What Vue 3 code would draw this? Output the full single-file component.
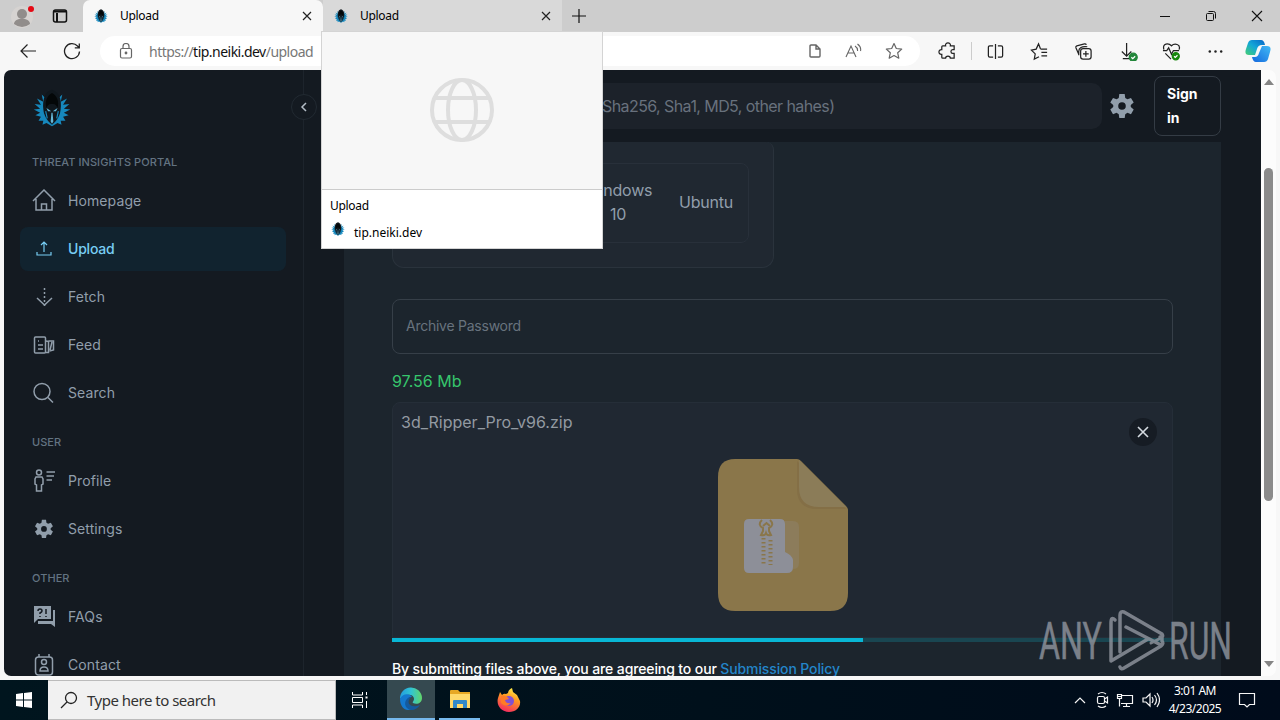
<template>
  <div class="desktop">
    <div class="titlebar">
      <div class="tab-tools">
        <svg class="avatar" width="28" height="30" viewBox="0 0 28 30">
          <circle cx="13" cy="16" r="11" fill="#d6d3d1" />
          <circle cx="13" cy="13" r="5" fill="#918d8b" />
          <path d="M5 23c0-7 16-7 16 0q-8 6-16 0z" fill="#918d8b" />
          <circle cx="22" cy="8" r="3" fill="#e50914" />
        </svg>
        <svg width="16" height="16" viewBox="0 0 16 16" fill="none" stroke="#111" stroke-width="1.5">
          <rect x="1.5" y="2" width="13" height="12" rx="2" />
          <path d="M2 3.5h12M5 5v9" stroke-width="2" />
        </svg>
      </div>
      <div v-for="n in 2" :key="n" :class="['browser-tab', { active: n === 1 }]">
        <svg class="favicon" viewBox="0 0 48 48"><use href="#mask" /></svg>
        <span class="tab-title">Upload</span>
        <svg class="tab-close" width="10" height="10" viewBox="0 0 10 10"><path d="M1 1l8 8M9 1L1 9" stroke="#222" stroke-width="1.2" /></svg>
      </div>
      <svg class="new-tab" width="14" height="14" viewBox="0 0 14 14"><path d="M7 0v14M0 7h14" stroke="#111" stroke-width="1.2" /></svg>
      <div class="window-controls">
        <svg width="12" height="12" viewBox="0 0 12 12"><path d="M1 6.5h10" stroke="#111" /></svg>
        <svg width="12" height="12" viewBox="0 0 12 12" fill="none" stroke="#111"><rect x="1.5" y="3.5" width="7" height="7" rx="1" /><path d="M3.5 1.5h5q2 0 2 2v5" /></svg>
        <svg width="12" height="12" viewBox="0 0 12 12"><path d="M1 1l10 10M11 1L1 11" stroke="#111" stroke-width="1.1" /></svg>
      </div>
    </div>

    <div class="toolbar">
      <svg class="nav-btn" width="18" height="16" viewBox="0 0 18 16" fill="none" stroke="#222" stroke-width="1.2"><path d="M17 8H2M8.500 1.500L2 8l6.500 6.500" /></svg>
      <svg class="nav-btn reload" width="18" height="18" viewBox="0 0 18 18" fill="none" stroke="#222" stroke-width="1.3"><path d="M16.500 9.500A7.500 7.500 0 1 1 14.500 4L16 5.500M16.300 1.500v4.300h-4.500" /></svg>
      <div class="address">
        <svg width="14" height="16" viewBox="0 0 14 16" fill="none" stroke="#666" stroke-width="1.2"><rect x="1.500" y="5.500" width="11" height="9.500" rx="1.500" /><path d="M4 5V3.500a3 3 0 0 1 6 0V5" /><circle cx="7" cy="10" r=".8" fill="#666" /></svg>
        <span class="url">https://<b>tip.neiki.dev</b>/upload</span>
        <div class="address-icons">
          <svg width="12" height="14" viewBox="0 0 12 14" fill="none" stroke="#666" stroke-width="1.400"><path d="M1 2q0-1 1-1h5l4 4v7q0 1-1 1H2q-1 0-1-1zM7 1v4h4" /></svg>
          <svg width="18" height="16" viewBox="0 0 18 16" fill="none" stroke="#666" stroke-width="1.100"><path d="M2 14L7 3l5 11M4 10h6M11 3q3 2 2.500 5M13.500 1q4 3 3 7" /></svg>
          <svg width="18" height="18" viewBox="0 0 18 18" fill="none" stroke="#666" stroke-width="1.200"><path d="M9 1.500l2.300 5 5.400.6-4 3.700 1.100 5.400L9 13.500l-4.800 2.700 1.100-5.400-4-3.700 5.400-.6z" stroke-linejoin="round" /></svg>
        </div>
      </div>
      <div class="tool-icons">
        <svg viewBox="0 0 20 20"><path d="M5 4h3c-1-4 6-4 5 0h4v4h-1.500c-2.500 0-2.500 4 0 4H17v5h-4c0-3-5-3-5 0H5q-1 0-1-1v-3c-4 .5-4-5.500 0-5V5q0-1 1-1z" /></svg>
        <i class="divider"></i>
        <svg viewBox="0 0 20 20"><path d="M10 2v16M7.500 4H4Q2.500 4 2.500 5.500v9Q2.500 16 4 16h3.500M12.500 4H16q1.500 0 1.500 1.500v9q0 1.500-1.500 1.500h-3.500" /></svg>
        <svg viewBox="0 0 20 20"><path d="M11 7L9 2 6.500 7.500 1.500 8.500l4 4-1 5.500 5-2.500M11 7.500h7M12 11h6M12 14.500h6" /></svg>
        <svg viewBox="0 0 20 20"><rect x="7" y="7" width="11" height="11" rx="2.500" /><path d="M12.500 9.500v6M9.500 12.500h6M5 13L2 6Q1.500 4.500 3 4l8-2q1.500-.3 2 1M14 5q-9-1-9 5v4" /></svg>
        <svg class="downloads" viewBox="0 0 20 20"><path d="M8 1v14M3 10l5 5 5-5M4 17.500h7" /><circle cx="15" cy="16" r="4.200" fill="#22863a" stroke="#22863a" /><path d="M13 16l1.500 1.500L17 15" stroke="#fff" /></svg>
        <svg viewBox="0 0 20 20"><path d="M2 8C0 1 7 1 10 4c3-3 10-2 8 4M1 9h4l2-3 3 7 2-4h6M3.500 12l6 6" /><circle cx="14.500" cy="15" r="3.700" fill="#16870b" stroke="#16870b" /><path d="M12.700 15l1.300 1.300 2.300-2.300" stroke="#fff" /></svg>
        <svg viewBox="0 0 20 20"><g fill="#222" stroke="none"><circle cx="4" cy="10" r="1.300" /><circle cx="10" cy="10" r="1.300" /><circle cx="16" cy="10" r="1.300" /></g></svg>
        <svg class="copilot" viewBox="0 0 26 24">
          <defs>
            <linearGradient id="cpA" x1="1" y1="0" x2="0" y2="1"><stop offset="0" stop-color="#0765c8" /><stop offset=".5" stop-color="#13a7d7" /><stop offset="1" stop-color="#46cf72" /></linearGradient>
            <linearGradient id="cpB" x1="0" y1="1" x2="1" y2="0"><stop offset="0" stop-color="#1468dd" /><stop offset="1" stop-color="#42baf5" /></linearGradient>
          </defs>
          <path d="M7 1h9q3 0 4 5h-3q-4 0-5 4l-2 6H4q-5 0-3-6l2-6q1-3 4-3z" fill="url(#cpA)" stroke="none" />
          <path d="M19 23h-8q-3 0-4-5h3q3 0 4-4l3-7h5q5 0 3 6l-2 7q-1 3-4 3z" fill="url(#cpB)" stroke="none" />
        </svg>
      </div>
    </div>

    <div class="viewport">
      <div class="page">
        <aside class="sidebar">
          <svg class="logo" viewBox="0 0 48 48">
            <g id="mask">
              <path d="M24 47L17 43l-5 2 1-5-6 0 3-5-7-2 6-3-8-4 8-1-7-6 8 1-5-8 8 4-2-9 6 6 1-8 6 8 6-8 1 8 6-6-2 9 8-4-5 8 8-1-7 6 8 1-8 4 6 3-7 2 3 5-6 0 1 5-5-2z" fill="#1688bd" />
              <path d="M24 1C13 3 11 19 14 31q3 9 10 14 7-5 10-14C37 17 35 4 24 1z" fill="#10171d" />
              <path d="M24 5c-7 4-9 11-7 19q2-6 7-5 5-1 7 5c2-8 0-15-7-19z" fill="#040708" />
              <path d="M17 24l6 4-4 0zM31 24l-6 4 4 0zM23.300 30h1.400l1 11-1.700 3-1.700-3z" fill="#65b8d8" />
              <path d="M16 28l2 9M32 28l-2 9" fill="none" stroke="#1688bd" stroke-width="1.500" />
            </g>
          </svg>
          <nav>
            <section v-for="group in groups" :key="group.title">
              <h6>{{ group.title }}</h6>
              <a v-for="item in group.items" :key="item.label" :class="['nav-item', { active: item.label === 'Upload' }]">
                <svg class="nav-icon" viewBox="0 0 24 24" v-html="item.icon"></svg>
                <span>{{ item.label }}</span>
              </a>
            </section>
          </nav>
          <button class="collapse"><svg width="8" height="10" viewBox="0 0 8 10" fill="none" stroke="#b4bdc7" stroke-width="1.500"><path d="M6 1L2 5l4 4" /></svg></button>
        </aside>

        <main>
          <header>
            <div class="page-search">Sha256, Sha1, MD5, other hahes)</div>
            <svg class="header-gear" viewBox="0 0 24 24" v-html="gear"></svg>
            <button class="sign-in">Sign in</button>
          </header>
          <div class="card">
            <div class="os-box">
              <div class="os-list"><span class="os">Windows 10</span><span class="os ubuntu">Ubuntu</span></div>
            </div>
            <div class="password">Archive Password</div>
            <div class="size">97.56 Mb</div>
            <div class="file-panel">
              <span class="file-name">3d_Ripper_Pro_v96.zip</span>
              <button class="remove"><svg width="12" height="12" viewBox="0 0 12 12"><path d="M1 1l10 10M11 1L1 11" stroke="#d5dbe1" stroke-width="1.600" /></svg></button>
              <svg class="zip" width="132" height="152" viewBox="0 0 132 152">
                <path d="M18 0h62q2 0 4 2l45 45q2 2 2 4v83q0 18-18 18H18Q1 152 1 134V18Q1 0 18 0z" fill="#8a764a" />
                <path d="M80 2v28q0 20 20 20h29z" fill="#846f46" />
                <path d="M82 1v27q0 20 20 20h27z" fill="#8b7c58" />
                <path d="M68 62h8q6 0 6 6v36q0 6-6 6h-8z" fill="#8c7c5b" />
                <path d="M32 60h31q5 0 5 5v28q7 3 8 8v7q0 6-6 6H32q-5 0-5-5V65q0-5 5-5z" fill="#8d8f98" />
                <g fill="none" stroke="#8a764a" stroke-width="2">
                  <path d="M45 61q-5 5 1 8v3l-2 4q4 1 5-2 1 3 5 2l-2-4v-3q6-3 1-8" />
                  <path d="M46 67l3.500-3 3.500 3" />
                  <path d="M46.500 79v28M53.500 81v25" stroke-width="4" stroke-dasharray="1.400 2.600" />
                </g>
              </svg>
            </div>
            <div class="progress"><div class="bar" :style="{ width: progress + '%' }"></div></div>
            <p class="policy">By submitting files above, you are agreeing to our <a>Submission Policy</a></p>
          </div>
        </main>
      </div>
      <div class="scrollbar"><i class="up"></i><div class="thumb"></div><i class="down"></i></div>
    </div>

    <div class="taskbar">
      <div class="start"><svg width="16" height="16" viewBox="0 0 16 16" fill="#fff"><path d="M0 2l7-1v6.500H0zM8 .9L16 0v7.500H8zM0 8.500h7V15l-7-1zM8 8.500h8V16l-8-.9z" /></svg></div>
      <div class="task-search"><svg width="18" height="18" viewBox="0 0 18 18" fill="none" stroke="#222" stroke-width="1.300"><circle cx="11" cy="7" r="5.500" /><path d="M7 11l-6 6" /></svg><span>Type here to search</span></div>
      <div class="task-icon view"><svg width="18" height="18" viewBox="0 0 18 18" fill="none" stroke="#fff"><path d="M1.500 1v3h10V1M1.500 17v-3h10v3M1.500 6.500h10v5h-10zM15.500 1v3M15.500 10v7" /><path d="M14.500 6.500h2" stroke-width="2" /></svg></div>
      <div class="task-icon current">
        <svg width="24" height="24" viewBox="0 0 24 24">
          <defs><linearGradient id="edgeTop"><stop stop-color="#239cdf" /><stop offset=".5" stop-color="#31c4d4" /><stop offset="1" stop-color="#62d66a" /></linearGradient></defs>
          <path d="M1 12a11 11 0 0 1 22-1c0 5-5 7-9 5-1-1 1-2 1-4 0-5-9-6-14 0z" fill="url(#edgeTop)" />
          <path d="M1 12c2-6 10-6 12-2-6 0-8 8 1 11-6 5-13 0-13-9z" fill="#1479cf" />
          <path d="M12 10c-6 6 0 12 9 8-4 6-10 6-13 3-4-4-1-11 4-11z" fill="#145a9e" />
        </svg>
      </div>
      <div class="task-icon open">
        <svg width="24" height="22" viewBox="0 0 24 22"><path d="M2 3q0-1 1-1h7l2 2h10v15H2z" fill="#e7a824" /><path d="M2 6h20v14H2z" fill="#ffd96a" /><path d="M5 20v-7q0-1 1-1h12q1 0 1 1v7h-4v-4H9v4z" fill="#3189ca" /></svg>
      </div>
      <div class="task-icon">
        <svg width="24" height="26" viewBox="0 0 24 26">
          <defs><linearGradient id="fox" x1=".7" y1="0" x2=".3" y2="1"><stop stop-color="#fff14a" /><stop offset=".4" stop-color="#ff9821" /><stop offset="1" stop-color="#f42762" /></linearGradient></defs>
          <path d="M3 5l2 3q2-2 4-1l2-1q0-3 4-5l1 4 4 3 1 2 2 4c1 6-4 11-11 11C4 25-1 18 1 11z" fill="url(#fox)" />
          <circle cx="12" cy="14" r="5" fill="#8050d5" /><path d="M4 9q5-1 8 3l-4 1q1 4 6 3-5 5-10 0z" fill="#ff7b26" />
        </svg>
      </div>
      <div class="tray">
        <svg width="12" height="16" viewBox="0 0 12 16"><path d="M1 11l5-5 5 5" /></svg>
        <svg width="14" height="18" viewBox="0 0 14 18"><rect x="2.500" y="5.500" width="7" height="7" rx="1.500" /><path d="M9.500 8l3-2v6l-3-2M3 3q4-3 8 0M3 15q4 3 8 0" /></svg>
        <svg width="18" height="16" viewBox="0 0 18 16"><path d="M5 3.500h11.500v8H5M10.500 11.500v3M7 14.500h7M3.500 7v7.500M1.500 2.500h4v4h-4zM2 4.500h3" /></svg>
        <svg width="18" height="16" viewBox="0 0 18 16"><path d="M1 6h3l4-4v12l-4-4H1zM10 5q2 3 0 6M12.500 3q4 5 0 10M15 1q5 7 0 14" /></svg>
        <div class="clock"><span>3:01 AM</span><span>4/23/2025</span></div>
        <svg class="notice" width="18" height="18" viewBox="0 0 18 18"><path d="M1.500 2.500h15v11h-5L9 16l-2.500-2.500h-5z" /></svg>
      </div>
    </div>

    <div class="tab-preview">
      <div class="preview-image"><svg width="64" height="64" viewBox="0 0 64 64" fill="none" stroke="#dedede" stroke-width="4"><circle cx="32" cy="32" r="30" /><ellipse cx="32" cy="32" rx="14" ry="30" /><path d="M4 20h56M4 44h56" /></svg></div>
      <div class="preview-info">
        <span>Upload</span>
        <div class="preview-site"><svg class="favicon" viewBox="0 0 48 48"><use href="#mask" /></svg><span>tip.neiki.dev</span></div>
      </div>
    </div>

    <svg class="watermark" width="200" height="66" viewBox="0 0 200 66">
      <text x="3" y="51" textLength="63" lengthAdjust="spacingAndGlyphs">ANY</text>
      <text x="133" y="51" textLength="63" lengthAdjust="spacingAndGlyphs">RUN</text>
      <g fill="none" stroke="#9297a0" stroke-width="3.5" stroke-linejoin="round" stroke-linecap="round">
        <path d="M79 12q-4-4-4 3v38l37-22" />
        <path d="M84 44V7q0-4 4-3l38 22q2 3-2 3M90 19l35 18M126 29v4q2 3-1 5L88 60q-3 2-4-1" />
        <path d="M125 30l-10 5" stroke-width="3" />
      </g>
    </svg>
  </div>
</template>

<script setup>
import { ref } from 'vue';

const progress = ref(60.3);

const gear = '<path fill="currentColor" stroke="none" fill-rule="evenodd" d="M9.500 1h5l.5 3.500 2 1.200 3.300-1.200 2.500 4.300L20.100 11v2l2.700 2.200L20.300 19.500 17 18.300l-2 1.200-.5 3.500h-5L9 19.500l-2-1.200-3.300 1.200-2.500-4.300L3.900 13v-2L1.200 8.800l2.500-4.300L7 5.700l2-1.200zM12 8.500a3.500 3.500 0 1 0 0 7 3.500 3.500 0 0 0 0-7z"/>';

const groups = [
  {
    title: 'THREAT INSIGHTS PORTAL',
    items: [
      { label: 'Homepage', icon: '<path d="M1 12L12 1l11 11M4 10v11h16V10M9.500 21v-6h5v6"/>' },
      { label: 'Upload', icon: '<path d="M12 15V5M9 8l3-3 3 3M5 15v3h14v-3" stroke-width="1.200"/>' },
      { label: 'Fetch', icon: '<path d="M12.500 3v18" stroke-dasharray="2 2"/><path d="M5 13l7.500 7 7.500-7"/>' },
      { label: 'Feed', icon: '<rect x="2.500" y="4" width="11" height="16" rx="1"/><path d="M6 8h1M6 12h5M6 16h5M13.500 8l3 .5v11h-3M16.500 8h5v9l-4 1M20 9l-2 8"/>' },
      { label: 'Search', icon: '<circle cx="10" cy="10.500" r="8"/><path d="M16 16.500l5 5"/>' }
    ]
  },
  {
    title: 'USER',
    items: [
      { label: 'Profile', icon: '<circle cx="7" cy="3.500" r="2.500"/><path d="M4 8h6l1 2v5l-1.500 1v6h-5v-6L3 15v-5zM14.500 3H23M14.500 7H22M14.500 11H20"/>' },
      { label: 'Settings', icon: gear.replace('<path', '<path transform="translate(2 2) scale(.83)"') }
    ]
  },
  {
    title: 'OTHER',
    items: [
      { label: 'FAQs', icon: '<path fill="currentColor" stroke="none" d="M2 1h17v13H6l-4 4zM21 5h2v17l-4-3H6v-3h15z"/><path d="M6 6q0-2 2-2t2 2q0 1-2 2v1M8 11v1M14 4v5M14 11v1" stroke="#141a21"/>' },
      { label: 'Contact', icon: '<rect x="3.500" y="4" width="17" height="18" rx="3"/><path d="M7 4V1M17 4V1"/><circle cx="12" cy="9" r="2.500"/><path d="M8 18q0-4 4-4t4 4z"/>' }
    ]
  }
];
</script>

<style>
body {
  margin: 0;
  overflow: hidden;
}
</style>

<style scoped>
* {
  box-sizing: border-box;
}

.desktop {
  position: relative;
  width: 1280px;
  height: 720px;
  display: flex;
  flex-direction: column;
  overflow: hidden;
  background: #f7f7f7;
  font-family: "Noto Sans", "Open Sans", sans-serif;
}

svg {
  flex: none;
  display: block;
}

button {
  padding: 0;
  font: inherit;
}

.titlebar {
  display: flex;
  height: 32px;
  background: #cdcdcd;
}

.tab-tools {
  width: 83px;
  display: flex;
  align-items: center;
  gap: 15px;
  padding-left: 9px;
  border-radius: 0 0 6px 0;
}

.browser-tab {
  display: flex;
  align-items: center;
  width: 239px;
  padding: 0 11px 0 11px;
  background: #d9d9d9;
  font-size: 12px;
  letter-spacing: -.3px;
}

.browser-tab.active {
  width: 240px;
  background: #f7f7f7;
  border-radius: 7px 7px 0 0;
}

.favicon {
  width: 14px;
  height: 14px;
}

.tab-title {
  flex: 1;
  margin: -2px 0 0 12px;
}

.new-tab {
  margin: 9px 0 0 10px;
}

.window-controls {
  display: flex;
  gap: 34px;
  align-items: center;
  margin-left: auto;
  padding-right: 17px;
}

.toolbar {
  display: flex;
  align-items: center;
  height: 38px;
  padding-left: 19px;
}

.reload {
  margin-left: 26px;
}

.address {
  display: flex;
  align-items: center;
  width: 820px;
  height: 30px;
  margin-left: 19px;
  padding: 0 17px 0 19px;
  border-radius: 15px;
  background: #fff;
}

.url {
  margin-left: 16px;
  color: #777;
  font-size: 14px;
  letter-spacing: -.52px;
}

.url b {
  color: #111;
  font-weight: 400;
}

.address-icons {
  display: flex;
  align-items: center;
  gap: 23px;
  margin-left: auto;
}

.tool-icons {
  display: flex;
  align-items: center;
  gap: 26px;
  margin-left: 18px;
}

.tool-icons svg {
  width: 19px;
  height: 19px;
  margin-right: -1px;
  fill: none;
  stroke: #222;
  stroke-width: 1.3;
}

.tool-icons .downloads {
  margin: 0 -2px 0 1px;
}

.divider {
  width: 1px;
  height: 18px;
  margin: 0 -12px 0 -11px;
  background: #ccc;
}

.tool-icons .copilot {
  width: 26px;
  height: 24px;
  margin-left: -5px;
}

.viewport {
  display: flex;
  height: 606px;
  margin: 0 4px 4px;
  border-radius: 7px;
  overflow: hidden;
}

.page {
  display: flex;
  width: 1257px;
  background: #141a21;
  font-family: Inter, "Liberation Sans", sans-serif;
}

.sidebar {
  position: relative;
  width: 300px;
  padding: 19px 17px 0 16px;
  border-right: 1px solid #1d242c;
}

.logo {
  width: 38px;
  height: 38px;
  margin-left: 13px;
}

nav {
  margin-top: 12px;
}

h6 {
  margin: 0;
  height: 40px;
  padding: 17px 12px 0;
  font-size: 11px;
  line-height: 12px;
  font-weight: 500;
  letter-spacing: .06px;
  color: #637381;
}

.nav-item {
  display: flex;
  align-items: center;
  gap: 12px;
  height: 44px;
  margin-bottom: 4px;
  padding-left: 12px;
  border-radius: 8px;
  color: #919eab;
  font-size: 14px;
  letter-spacing: .1px;
}

.nav-item span {
  padding-bottom: 1px;
}

.nav-item.active {
  background: #11232f;
  color: #78cdf4;
  font-weight: 500;
  letter-spacing: -.2px;
}

.nav-icon {
  width: 24px;
  height: 24px;
  fill: none;
  stroke: currentColor;
  stroke-width: 1.5;
}

.collapse {
  position: absolute;
  top: 24px;
  right: -14px;
  display: grid;
  place-items: center;
  width: 26px;
  height: 26px;
  border: 1px solid #222a32;
  border-radius: 50%;
  background: #141a21;
}

main {
  flex: 1;
  padding: 0 40px;
}

header {
  display: flex;
  align-items: center;
  height: 72px;
}

.page-search {
  width: 758px;
  height: 46px;
  padding-left: 258px;
  border-radius: 10px;
  background: #1c222a;
  color: #68717d;
  font-size: 16px;
  line-height: 46px;
  letter-spacing: -.58px;
}

.header-gear {
  width: 26px;
  height: 26px;
  margin-left: 7px;
  color: #919eab;
}

.sign-in {
  width: 67px;
  height: 60px;
  margin-left: auto;
  padding: 0 12px;
  border: 1px solid #343c45;
  border-radius: 8px;
  background: transparent;
  color: #fff;
  font-size: 14px;
  line-height: 24px;
  font-weight: 700;
  text-align: left;
}

.card {
  height: 534px;
  padding: 0 48px;
  background: #1c252d;
}

.os-box {
  width: 382px;
  height: 126px;
  padding: 21px 24px 24px;
  border: 1px solid #2a333c;
  border-top: 0;
  border-radius: 0 8px 12px 12px;
  background: #202831;
}

.os-list {
  display: flex;
  align-items: center;
  justify-content: flex-end;
  gap: 27px;
  height: 80px;
  padding: 0 15px 2px 0;
  border: 1px solid #28303a;
  border-radius: 8px;
  color: #919eab;
  font-size: 16px;
  line-height: 24px;
  letter-spacing: -.2px;
}

.os {
  width: 68px;
  text-align: center;
}

.ubuntu {
  width: 54px;
}

.password {
  height: 55px;
  margin-top: 31px;
  padding-left: 13px;
  border: 1px solid #363f48;
  border-radius: 8px;
  color: #68737e;
  font-size: 14px;
  line-height: 51px;
  letter-spacing: -.25px;
}

.size {
  height: 48px;
  padding-top: 15px;
  color: #36c66c;
  font-size: 16px;
  line-height: 24px;
}

.file-panel {
  position: relative;
  height: 236px;
  padding: 7px 8px;
  border: 1px solid #252e38;
  border-radius: 8px 8px 0 0;
  background: #202832;
}

.file-name {
  display: block;
  color: #939aa2;
  font-size: 16px;
  line-height: 24px;
}

.remove {
  position: absolute;
  top: 15px;
  right: 15px;
  display: grid;
  place-items: center;
  width: 28px;
  height: 28px;
  border: 0;
  border-radius: 50%;
  background: #161c24;
}

.zip {
  margin: 25px auto 0;
}

.progress {
  height: 4px;
  background: #194651;
}

.bar {
  height: 4px;
  background: #08b7d5;
}

.policy {
  margin: 16px 0 0;
  color: #fff;
  font-size: 14px;
  line-height: 22px;
  font-weight: 500;
  letter-spacing: -.12px;
}

.policy a {
  color: #2386ca;
}

.scrollbar {
  display: flex;
  flex-direction: column;
  align-items: center;
  width: 15px;
  padding: 9px 0;
  background: #fcfcfc;
}

.up,
.down {
  border: 5px solid transparent;
  border-top: 0;
  border-bottom: 6px solid #858585;
}

.thumb {
  width: 9px;
  height: 333px;
  margin-top: 83px;
  border-radius: 5px;
  background: #8b8b8b;
}

.down {
  margin-top: auto;
  border-top: 6px solid #858585;
  border-bottom: 0;
}

.taskbar {
  display: flex;
  height: 40px;
  background: linear-gradient(90deg, #00151e, #00101b 55%, #000b1b);
}

.start {
  display: grid;
  place-items: center;
  width: 48px;
}

.task-search {
  display: flex;
  align-items: center;
  gap: 9px;
  width: 288px;
  padding-left: 12px;
  border: 1px solid #bbb;
  border-left: 0;
  background: #f1f1f1;
  color: #333;
  font-size: 15px;
  letter-spacing: -.5px;
}

.task-icon {
  display: grid;
  place-items: center;
  width: 49px;
}

.task-icon.current {
  width: 48px;
  background: #354950;
  border-bottom: 2px solid #76b9ed;
}

.task-icon.open {
  border-bottom: 2px solid #76b9ed;
  width: 41px;
  margin: 0 4px;
}

.task-icon.view {
  width: 51px;
  padding-right: 3px;
}

.tray {
  display: flex;
  align-items: center;
  gap: 8px;
  margin-left: auto;
  padding-right: 24px;
  color: #fff;
}

.tray svg {
  fill: none;
  stroke: #f5f5f5;
  stroke-width: 1.2;
}

.tray svg:nth-child(2) {
  margin: 0 -1px 0 1px;
}

.clock {
  display: flex;
  flex-direction: column;
  align-items: center;
  width: 54px;
  font-size: 12px;
  line-height: 18px;
  letter-spacing: -.5px;
}

.notice {
  margin-left: 8px;
}

.tab-preview {
  position: absolute;
  top: 31px;
  left: 321px;
  width: 282px;
  height: 218px;
  border: 1px solid #d4d4d4;
  background: #fff;
  font-size: 12px;
}

.preview-image {
  display: grid;
  place-items: center;
  height: 158px;
  padding-bottom: 2px;
  border-bottom: 1px solid #ccc;
  background: #f7f7f7;
}

.preview-info {
  padding: 7px 8px;
  line-height: 17px;
}

.preview-info > span {
  letter-spacing: -.3px;
}

.preview-site {
  display: flex;
  gap: 9px;
  margin: 8px 0 0 1px;
}

.preview-site span {
  padding-top: 2px;
}

.watermark {
  position: absolute;
  left: 1036px;
  top: 608px;
  fill: #9297a0;
  opacity: .8;
}

.watermark text {
  font: 400 52px Roboto, sans-serif;
  stroke: #9297a0;
  stroke-width: .5;
}
</style>
